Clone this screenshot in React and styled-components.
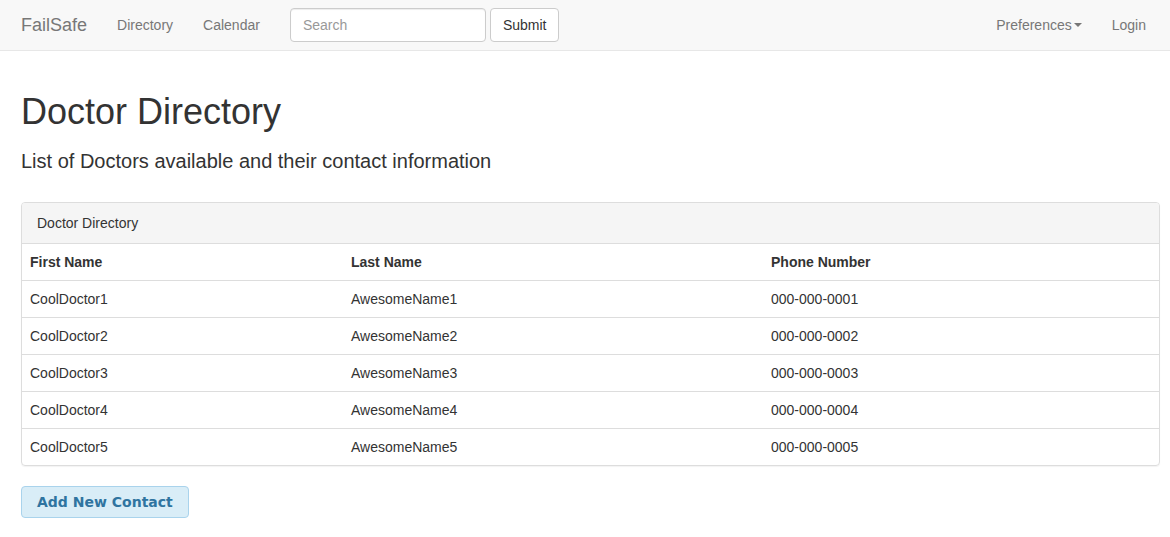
import React from 'react'
import styled, { createGlobalStyle } from 'styled-components'

const GlobalStyle = createGlobalStyle`
  html, body {
    margin: 0;
    padding: 0;
    background: #fff;
  }
  body {
    font-family: "Liberation Sans", Arial, sans-serif;
    font-size: 14px;
    line-height: 1.42857;
    color: #333;
  }
  * {
    box-sizing: border-box;
  }
`

const Navbar = styled.nav`
  display: flex;
  align-items: flex-start;
  height: 51px;
  padding: 0 9px 0 6px;
  background: #f8f8f8;
  border-bottom: 1px solid #e7e7e7;
`

const Brand = styled.a`
  padding: 15px;
  font-size: 18px;
  line-height: 20px;
  color: #777;
  text-decoration: none;
`

const NavLink = styled.a`
  display: flex;
  align-items: center;
  padding: 15px;
  line-height: 20px;
  color: #777;
  text-decoration: none;
`

const SearchForm = styled.form`
  display: flex;
  gap: 4px;
  padding: 8px 15px;
`

const SearchInput = styled.input`
  width: 196px;
  height: 34px;
  padding: 6px 12px;
  font-family: inherit;
  font-size: 14px;
  color: #555;
  background: #fff;
  border: 1px solid #ccc;
  border-radius: 4px;
  box-shadow: inset 0 1px 1px rgba(0, 0, 0, 0.075);

  &::placeholder {
    color: #999;
  }
`

const SubmitButton = styled.button`
  height: 34px;
  padding: 6px 12px;
  font-family: inherit;
  font-size: 14px;
  color: #333;
  background: #fff;
  border: 1px solid #ccc;
  border-radius: 4px;
`

const Spacer = styled.div`
  flex: 1;
`

const Caret = styled.span`
  display: inline-block;
  width: 0;
  height: 0;
  margin-left: 2px;
  border-top: 4px solid #777;
  border-left: 4px solid transparent;
  border-right: 4px solid transparent;
`

const Main = styled.main`
  padding: 0 10px 0 21px;
`

const Title = styled.h1`
  margin: 41px 0 0;
  font-size: 36px;
  font-weight: 500;
  line-height: 1.1;
  color: #333;
`

const Subtitle = styled.h3`
  margin: 18px 0 30px;
  font-size: 20px;
  font-weight: 500;
  line-height: 1.1;
  color: #333;
`

const Panel = styled.div`
  border: 1px solid #ddd;
  border-radius: 4px;
  overflow: hidden;
  box-shadow: 0 1px 1px rgba(0, 0, 0, 0.05);
`

const PanelHeading = styled.div`
  padding: 10px 15px;
  line-height: 20px;
  background: #f5f5f5;
  border-bottom: 1px solid #ddd;
`

const Table = styled.table`
  width: 100%;
  border-collapse: collapse;
  table-layout: fixed;
`

const Cell = styled.td`
  width: ${(p) => p.$width || 'auto'};
  padding: 8px;
  line-height: 20px;
  text-align: left;
  font-weight: ${(p) => (p.$head ? 'bold' : 'normal')};
`

const Row = styled.tr`
  & + & {
    border-top: 1px solid #ddd;
  }
`

const HeadRow = styled.tr`
  border-bottom: 1px solid #ddd;
`

const AddButton = styled.button`
  margin-top: 20px;
  height: 32px;
  padding: 0 15px;
  font-family: "DejaVu Sans", Verdana, sans-serif;
  font-size: 14px;
  font-weight: bold;
  color: #2f74a0;
  background: #d9edf7;
  border: 1px solid #a9d3ec;
  border-radius: 4px;
`

const doctors = [1, 2, 3, 4, 5].map((n) => ({
  first: `CoolDoctor${n}`,
  last: `AwesomeName${n}`,
  phone: `000-000-000${n}`,
}))

const App = () => {
  return (
    <>
      <GlobalStyle />
      <Navbar>
        <Brand href="#">FailSafe</Brand>
        <NavLink href="#">Directory</NavLink>
        <NavLink href="#">Calendar</NavLink>
        <SearchForm onSubmit={(e) => e.preventDefault()}>
          <SearchInput type="text" placeholder="Search" />
          <SubmitButton type="submit">Submit</SubmitButton>
        </SearchForm>
        <Spacer />
        <NavLink href="#">
          Preferences
          <Caret />
        </NavLink>
        <NavLink href="#">Login</NavLink>
      </Navbar>
      <Main>
        <Title>Doctor Directory</Title>
        <Subtitle>List of Doctors available and their contact information</Subtitle>
        <Panel>
          <PanelHeading>Doctor Directory</PanelHeading>
          <Table>
            <thead>
              <HeadRow>
                <Cell as="th" $head $width="321px">First Name</Cell>
                <Cell as="th" $head $width="420px">Last Name</Cell>
                <Cell as="th" $head>Phone Number</Cell>
              </HeadRow>
            </thead>
            <tbody>
              {doctors.map((d) => (
                <Row key={d.first}>
                  <Cell>{d.first}</Cell>
                  <Cell>{d.last}</Cell>
                  <Cell>{d.phone}</Cell>
                </Row>
              ))}
            </tbody>
          </Table>
        </Panel>
        <AddButton type="button">Add New Contact</AddButton>
      </Main>
    </>
  )
}

export default App
